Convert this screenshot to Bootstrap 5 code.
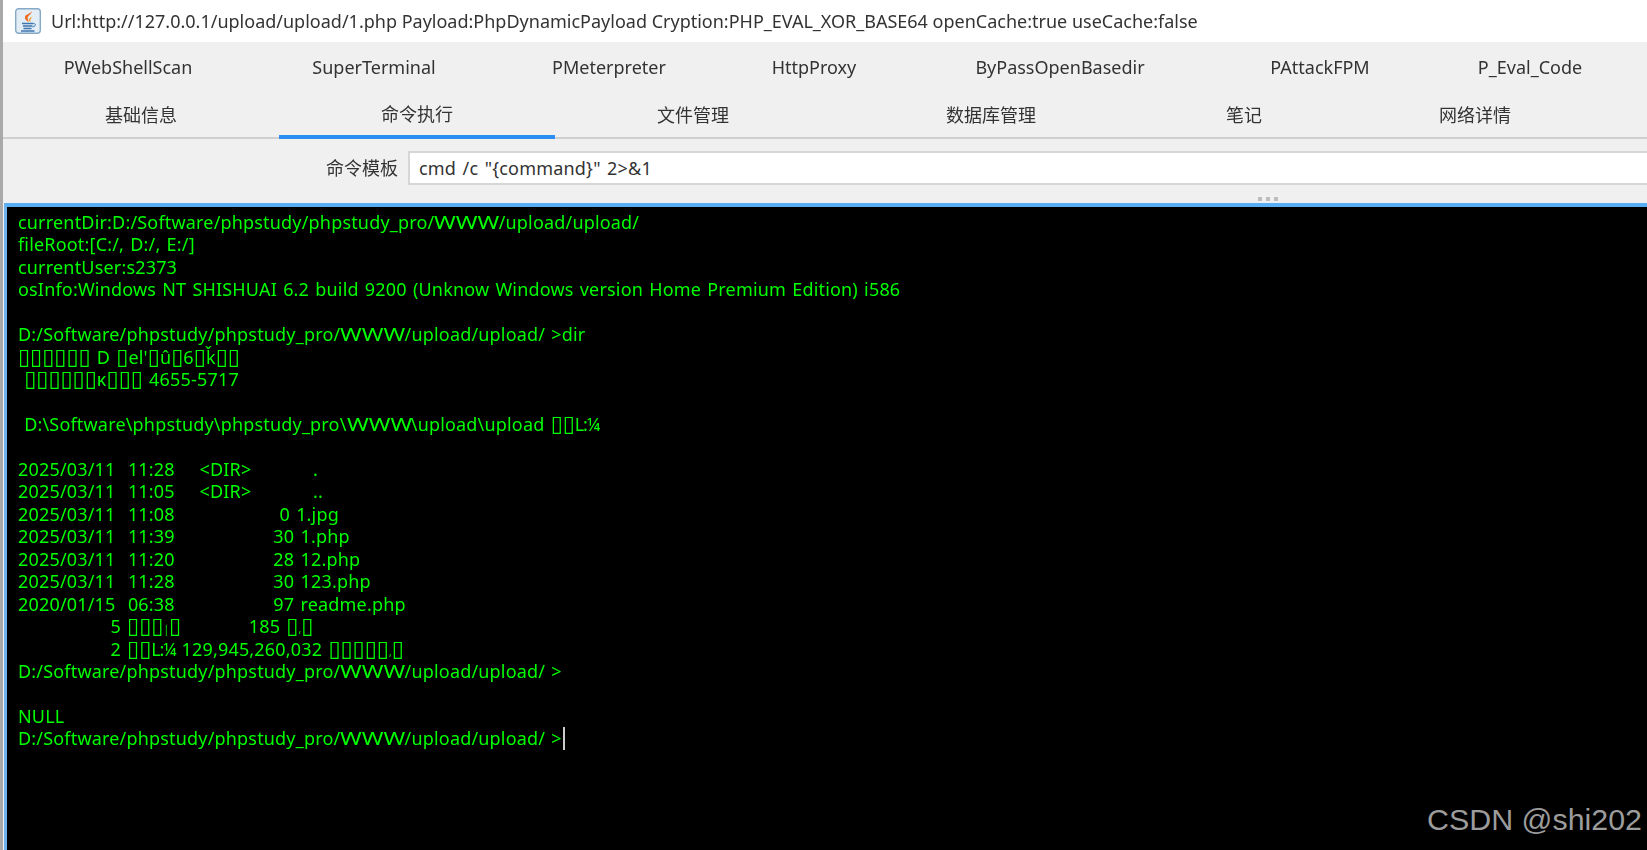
<!DOCTYPE html>
<html lang="zh">
<head>
<meta charset="utf-8">
<title>Godzilla</title>
<link href="https://cdn.jsdelivr.net/npm/bootstrap@5.3.0/dist/css/bootstrap.min.css" rel="stylesheet">
<style>
html,body{height:850px;overflow:hidden;background:#f0f0f0}
body{font-family:"Noto Sans","Noto Sans CJK SC",sans-serif;color:#333}
.frame-box{height:850px;border-left:3px solid #a9a9a9;position:relative;overflow:hidden}
.title-strip{height:42px;background:#fff;padding-left:12px;font-size:18px;color:#333;white-space:nowrap}
.title-words{margin-left:2px;filter:blur(.3px)}
.tab-row{display:grid;list-style:none;margin:0;padding:0;background:#f0f0f0}
.tab-row-a{height:49px;grid-template-columns:250px 242px 228px 182px 310px 210px 210px;padding-top:1px}
.tab-row-b{height:48px;grid-template-columns:276px 276px 276px 320px 186px 276px;border-bottom:2px solid #cfcfcf}
.tab-row-b .tab-cell{padding-top:3px}
.tab-cell{display:flex;align-items:center;justify-content:center;font-size:18px;color:#333}
.tab-cell span{filter:blur(.3px)}
.tab-on{border-bottom:4px solid #2a8ff0;margin-bottom:-2px}
.cmd-strip{height:46px;padding-top:12px}
.cmd-label{font-size:18px;width:405px;height:34px;padding-right:10px;color:#333;filter:blur(.3px)}
.cmd-input{height:34px;border-radius:0;border:2px solid #d6d6d6;border-right:0;font-size:18px;word-spacing:1.5px;letter-spacing:.2px;padding:0 9px;color:#333;box-shadow:none}
.split-strip{height:18px;padding-left:1255px;padding-bottom:2px}
.split-dot{width:4px;height:4px;background:#bdbdbd}
.term-pane{height:647px;background:#000;border-top:4px solid #58aef5;border-left:3px solid #6fb2ee;margin-left:1px;padding:4px 0 0 11px;position:relative}
.term-text{margin:0;font-family:"Noto Sans","Noto Sans CJK SC",sans-serif;font-size:18px;line-height:22.45px;letter-spacing:.18px;word-spacing:1.3px;color:#00ff00;white-space:pre;overflow:visible;filter:blur(.3px)}
.wide-w{display:inline-block;letter-spacing:0;line-height:1;transform:scaleX(1.3);transform-origin:left center;margin-right:14px}
.miss-box{font-family:"DejaVu Sans",sans-serif;font-size:22px;line-height:0;letter-spacing:0;word-spacing:0}
.thin-mark{font-size:10px;line-height:0;letter-spacing:0}
.tight-run{letter-spacing:-1.2px}
.term-caret{display:inline-block;width:2px;height:23px;line-height:1;background:#ccc;vertical-align:-5px;margin-left:1px}
.mark-text{position:absolute;right:5px;top:595px;font-family:"Liberation Sans",sans-serif;font-size:30.4px;line-height:34px;color:#9c9c9c;white-space:nowrap}
</style>
</head>
<body>
<div class="frame-box">
<div class="title-strip d-flex align-items-center gap-2">
<svg width="26" height="26" viewBox="0 0 26 26" aria-hidden="true"><rect x=".7" y=".7" width="24.600" height="24.600" rx="3" fill="#e3edf5" stroke="#86a9c6" stroke-width="1.400"/><path d="M16.500 3c.8 3.200-4.500 4.800-3.800 7.800.2 1 .8 1.800 1.300 3.200-2.800-1.200-4.600-3-4-5.300.7-2.600 6-3 6.500-5.700z" fill="#ee6a1f"/><path d="M17.500 8.500c-.3 1.800-2.300 2-2.200 3.800 0 .6.300 1 .5 1.700-1.300-.5-2.300-1.600-2-3 .4-1.500 3-1.400 3.700-2.500z" fill="#f5a03a"/><path d="M7 15.500h11.500M8 18h9.500M8.500 20.500h8M6 23h13.500" fill="none" stroke="#3e76ad" stroke-width="1.500"/><path d="M18.500 15.500c2.500-.3 2.700 2.800-1 3.500" fill="none" stroke="#3e76ad"/></svg>
<span class="title-words">Url:http://127.0.0.1/upload/upload/1.php Payload:PhpDynamicPayload Cryption:PHP_EVAL_XOR_BASE64 openCache:true useCache:false</span>
</div>
<ul class="tab-row tab-row-a">
<li class="tab-cell"><span>PWebShellScan</span></li><li class="tab-cell"><span>SuperTerminal</span></li><li class="tab-cell"><span>PMeterpreter</span></li><li class="tab-cell"><span>HttpProxy</span></li><li class="tab-cell"><span>ByPassOpenBasedir</span></li><li class="tab-cell"><span>PAttackFPM</span></li><li class="tab-cell"><span>P_Eval_Code</span></li>
</ul>
<ul class="tab-row tab-row-b">
<li class="tab-cell"><span>基础信息</span></li><li class="tab-cell tab-on"><span>命令执行</span></li><li class="tab-cell"><span>文件管理</span></li><li class="tab-cell"><span>数据库管理</span></li><li class="tab-cell"><span>笔记</span></li><li class="tab-cell"><span>网络详情</span></li>
</ul>
<div class="cmd-strip d-flex">
<label class="cmd-label d-flex align-items-center justify-content-end flex-shrink-0" for="tpl">命令模板</label>
<input id="tpl" class="form-control cmd-input flex-grow-1" value='cmd /c "{command}" 2&gt;&amp;1'>
</div>
<div class="split-strip d-flex align-items-end gap-1"><i class="split-dot"></i><i class="split-dot"></i><i class="split-dot"></i></div>
<div class="term-pane">
<pre class="term-text">currentDir:D:/Software/phpstudy/phpstudy_pro/<span class="wide-w">WWW</span>/upload/upload/
fileRoot:[C:/, D:/, E:/]
currentUser:s2373
osInfo:Windows NT SHISHUAI 6.2 build 9200 (Unknow Windows version Home Premium Edition) i586

D:/Software/phpstudy/phpstudy_pro/<span class="wide-w">WWW</span>/upload/upload/ &gt;dir
<span class="miss-box">▯▯▯▯▯▯</span> D <span class="miss-box">▯</span>el'<span class="miss-box">▯</span>û<span class="miss-box">▯</span>6<span class="miss-box">▯</span>ǩ<span class="miss-box">▯▯</span>
 <span class="miss-box">▯▯▯▯▯▯</span>κ<span class="miss-box">▯▯▯</span> 4655-5717

 D:\Software\phpstudy\phpstudy_pro\<span class="wide-w">WWW</span>\upload\upload <span class="miss-box">▯▯</span><span class="tight-run">L:¼</span>

2025/03/11  11:28    &lt;DIR&gt;          .
2025/03/11  11:05    &lt;DIR&gt;          ..
2025/03/11  11:08                 0 1.jpg
2025/03/11  11:39                30 1.php
2025/03/11  11:20                28 12.php
2025/03/11  11:28                30 123.php
2020/01/15  06:38                97 readme.php
               5 <span class="miss-box">▯▯▯</span><span class="thin-mark">|</span><span class="miss-box">▯</span>           185 <span class="miss-box">▯</span><span class="thin-mark">,</span><span class="miss-box">▯</span>
               2 <span class="miss-box">▯▯</span><span class="tight-run">L:¼</span> 129,945,260,032 <span class="miss-box">▯▯▯▯▯</span><span class="thin-mark">,</span><span class="miss-box">▯</span>
D:/Software/phpstudy/phpstudy_pro/<span class="wide-w">WWW</span>/upload/upload/ &gt;

NULL
D:/Software/phpstudy/phpstudy_pro/<span class="wide-w">WWW</span>/upload/upload/ &gt;<span class="term-caret"></span></pre>
<div class="mark-text">CSDN @shi202</div>
</div>
</div>
<script src="https://cdn.jsdelivr.net/npm/bootstrap@5.3.0/dist/js/bootstrap.bundle.min.js"></script>
</body>
</html>
